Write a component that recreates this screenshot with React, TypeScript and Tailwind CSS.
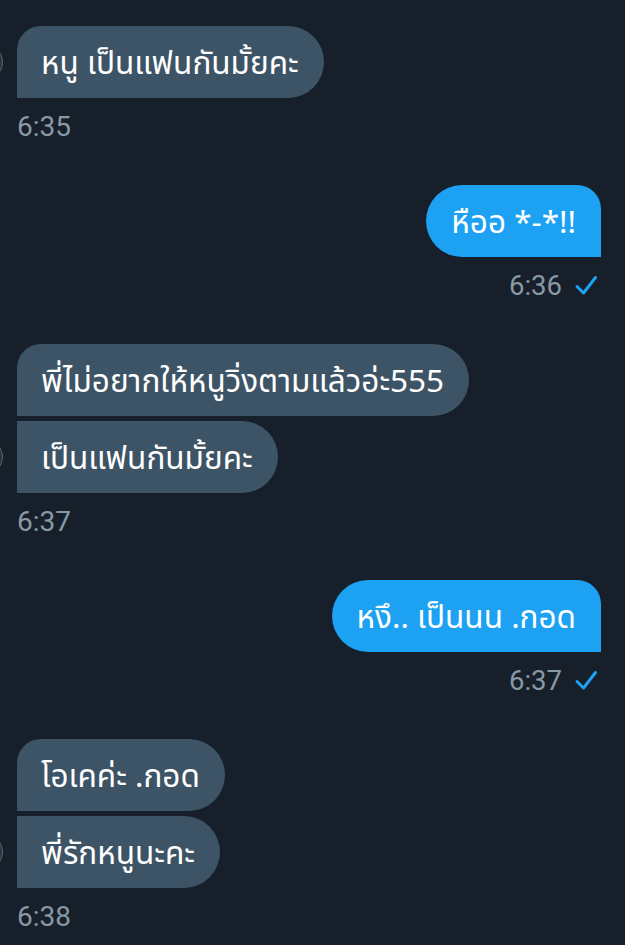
import React from "react";

type Msg = { text: string };

function Check() {
  return (
    <svg width="24" height="24" viewBox="0 0 24 24" className="ml-[12px]" fill="none">
      <path d="M3 12.5 L9.5 19 L21.5 3.5" stroke="#1da1f2" strokeWidth="3" strokeLinecap="round" strokeLinejoin="round" />
    </svg>
  );
}

function Received({ msgs, time }: { msgs: Msg[]; time: string }) {
  return (
    <div className="flex flex-col items-start mb-[41px]">
      <div className="relative flex flex-col items-start gap-[5px]">
        <div className="absolute left-[-50px] bottom-[18px] w-[36px] h-[36px] rounded-full border border-[#59636c] bg-[#2b353f]" />
        {msgs.map((m, i) => {
          const first = i === 0;
          return (
            <div
              key={i}
              className={
                "relative h-[72px] flex items-center pl-[24px] pr-[25px] bg-[#3d5466] text-white text-[31.5px] rounded-r-[36px] " +
                (first ? "rounded-tl-[24px]" : "")
              }
            >
              {m.text}
            </div>
          );
        })}
      </div>
      <div className="mt-[12px] h-[34px] leading-[34px] text-[28px] text-[#8899a6] font-['Roboto',sans-serif]">{time}</div>
    </div>
  );
}

function Sent({ text, time }: { text: string; time: string }) {
  return (
    <div className="flex flex-col items-end mb-[41px] pr-[24px]">
      <div className="h-[72px] flex items-center pl-[25px] pr-[25px] bg-[#1da1f2] text-white text-[31.5px] rounded-l-[36px] rounded-tr-[24px]">
        {text}
      </div>
      <div className="mt-[12px] h-[34px] flex items-center pr-[3px]">
        <span className="text-[27.5px] leading-[34px] text-[#8899a6] font-['Roboto',sans-serif]">{time}</span>
        <Check />
      </div>
    </div>
  );
}

export default function App() {
  return (
    <div className="w-[625px] h-[945px] overflow-hidden bg-[#17202a] pt-[26px] pl-[17px] font-['Noto_Sans','Noto_Sans_Thai',sans-serif]">
      <Received msgs={[{ text: "หนู เป็นแฟนกันมั้ยคะ" }]} time="6:35" />
      <Sent text="หืออ *-*!!" time="6:36" />
      <Received msgs={[{ text: "พี่ไม่อยากให้หนูวิ่งตามแล้วอ่ะ555" }, { text: "เป็นแฟนกันมั้ยคะ" }]} time="6:37" />
      <Sent text="หงึ.. เป็นนน .กอด" time="6:37" />
      <Received msgs={[{ text: "โอเคค่ะ .กอด" }, { text: "พี่รักหนูนะคะ" }]} time="6:38" />
    </div>
  );
}
